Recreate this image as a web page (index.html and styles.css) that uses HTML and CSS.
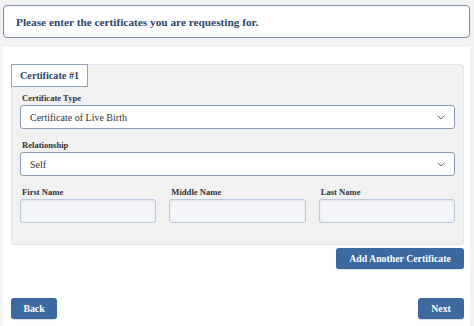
FILE: index.html
```html
<!DOCTYPE html>
<html lang="en">
<head>
<meta charset="utf-8">
<title>Certificates</title>
<link rel="stylesheet" href="styles.css">
</head>
<body>
<div class="page">
  <div class="header">Please enter the certificates you are requesting for.</div>
  <div class="panel">
    <div class="card">
      <div class="tab">Certificate #1</div>
      <div class="fields">
        <label class="label first">Certificate Type</label>
        <div class="select"><span>Certificate of Live Birth</span>
          <svg class="chev" viewBox="0 0 8 5" width="8" height="5"><path d="M0.7 0.7l3.3 3.3 3.3-3.3" fill="none" stroke="#666" stroke-width="1"/></svg>
        </div>
        <label class="label">Relationship</label>
        <div class="select"><span>Self</span>
          <svg class="chev" viewBox="0 0 8 5" width="8" height="5"><path d="M0.7 0.7l3.3 3.3 3.3-3.3" fill="none" stroke="#666" stroke-width="1"/></svg>
        </div>
        <div class="names">
          <div class="name"><label class="label">First Name</label><div class="input"></div></div>
          <div class="name"><label class="label">Middle Name</label><div class="input"></div></div>
          <div class="name"><label class="label">Last Name</label><div class="input"></div></div>
        </div>
      </div>
    </div>
    <div class="addrow"><button class="btn add">Add Another Certificate</button></div>
    <div class="navrow">
      <button class="btn nav">Back</button>
      <button class="btn nav">Next</button>
    </div>
  </div>
</div>
</body>
</html>
```
FILE: styles.css
```css
html, body {
  margin: 0;
  padding: 0;
  background: #f2f2f2;
  font-family: "Liberation Serif", "DejaVu Serif", serif;
  color: #333;
}
.page {
  width: 474px;
  height: 326px;
  overflow: hidden;
  padding-top: 5px;
  box-sizing: border-box;
}
.header {
  margin: 0 4px 0 3px;
  height: 33px;
  box-sizing: border-box;
  border: 1px solid #7e8ea6;
  border-radius: 4px;
  background: #fff;
  display: flex;
  align-items: center;
  padding-left: 12px;
  font-size: 11.3px;
  font-weight: bold;
  color: #2b4668;
  white-space: nowrap;
}
.panel {
  margin: 9px 4px 0 3px;
  background: #fff;
  height: 300px;
  padding: 17px 6px 0 8px;
  box-sizing: border-box;
}
.card {
  background: #f1f1f1;
  border: 1px solid #e4e4e4;
  border-radius: 3px;
  height: 181px;
  box-sizing: border-box;
}
.tab {
  display: inline-flex;
  align-items: center;
  height: 23px;
  box-sizing: border-box;
  margin: -1px 0 0 -1px;
  padding: 0 8px;
  width: 77px;
  background: #fff;
  border: 1px solid #8ea3bd;
  font-size: 10.2px;
  font-weight: bold;
  color: #2b4668;
  white-space: nowrap;
}
.fields {
  padding: 0 8px 0 8px;
  display: flex;
  flex-direction: column;
}
.label {
  display: block;
  font-size: 8.6px;
  font-weight: bold;
  color: #333;
  height: 13px;
  line-height: 13px;
  padding-left: 2px;
  margin-top: 10px;
  white-space: nowrap;
}
.label.first {
  margin-top: 5px;
}
.select {
  height: 24px;
  box-sizing: border-box;
  background: #fff;
  border: 1px solid #8b9ab4;
  border-radius: 3px;
  display: flex;
  align-items: center;
  justify-content: space-between;
  padding: 0 9px 0 9px;
  font-size: 10px;
  color: #333;
}
.chev {
  display: block;
}
.names {
  display: flex;
  gap: 13px;
}
.name {
  flex: 1;
}
.input {
  height: 24px;
  box-sizing: border-box;
  background: #f4f5f9;
  border: 1.5px solid #bccbe0;
  border-radius: 3px;
  box-shadow: inset 0 1px 2px rgba(0,0,0,0.08);
}
.addrow {
  display: flex;
  justify-content: flex-end;
  margin-top: 3px;
}
.btn {
  background: #3b69a0;
  color: #fff;
  border: none;
  border-radius: 3px;
  font-family: "Liberation Serif", "DejaVu Serif", serif;
  font-weight: bold;
  font-size: 9.8px;
  height: 21px;
  padding: 0;
  box-shadow: 0 1px 1px rgba(0,0,0,0.15);
  white-space: nowrap;
}
.add {
  width: 128px;
}
.navrow {
  display: flex;
  justify-content: space-between;
  margin-top: 29px;
}
.nav {
  width: 46px;
}
```
